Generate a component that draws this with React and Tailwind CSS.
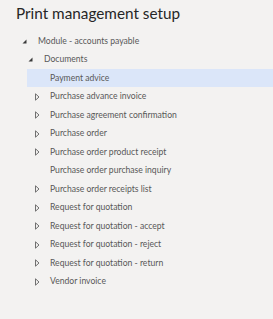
import React from 'react';

const items = [
  { label: 'Payment advice', expandable: false, selected: true },
  { label: 'Purchase advance invoice', expandable: true },
  { label: 'Purchase agreement confirmation', expandable: true },
  { label: 'Purchase order', expandable: true },
  { label: 'Purchase order product receipt', expandable: true },
  { label: 'Purchase order purchase inquiry', expandable: false },
  { label: 'Purchase order receipts list', expandable: true },
  { label: 'Request for quotation', expandable: true },
  { label: 'Request for quotation - accept', expandable: true },
  { label: 'Request for quotation - reject', expandable: true },
  { label: 'Request for quotation - return', expandable: true },
  { label: 'Vendor invoice', expandable: true },
];

const Expanded = () => (
  <svg width="5" height="5" viewBox="0 0 5 5" className="block">
    <path d="M4.5 0.5 L4.5 4.5 L0.5 4.5 Z" fill="#3a3a3a" />
  </svg>
);

const Collapsed = () => (
  <svg width="5" height="8" viewBox="0 0 5 8" className="block">
    <path d="M0.5 0.8 L4 4 L0.5 7.2 Z" fill="none" stroke="#707070" strokeWidth="1" />
  </svg>
);

const App = () => {
  return (
    <div className="w-full h-[319px] bg-[#f3f2f1] overflow-hidden font-['Lato',sans-serif]">
      <h1 className="pl-4 pt-[3px] h-[31.75px] text-[15.3px] leading-[20px] text-[#262626]">
        Print management setup
      </h1>
      <div className="text-[8.6px] text-[#585858]">
        <div className="flex items-center h-[18.5px] pl-[22px]">
          <span className="w-4 flex"><Expanded /></span>
          <span>Module - accounts payable</span>
        </div>
        <div className="flex items-center h-[18.5px] pl-[28px]">
          <span className="w-4 flex"><Expanded /></span>
          <span>Documents</span>
        </div>
        {items.map((item) => (
          <div
            key={item.label}
            className={
              item.selected
                ? 'flex items-center h-[18.5px] ml-[27px] pl-[8px] bg-[#dbe6f9]'
                : 'flex items-center h-[18.5px] ml-[27px] pl-[8px]'
            }
          >
            <span className="w-[15px] flex">{item.expandable && <Collapsed />}</span>
            <span>{item.label}</span>
          </div>
        ))}
      </div>
    </div>
  );
};

export default App;
